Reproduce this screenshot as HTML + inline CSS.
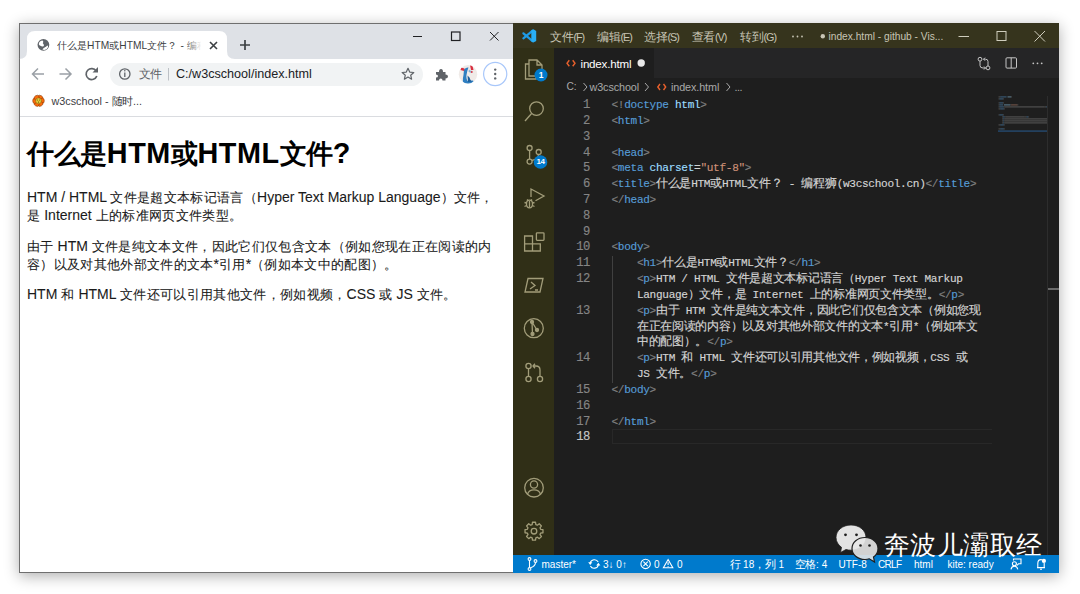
<!DOCTYPE html><html><head><meta charset="utf-8"><style>
*{margin:0;padding:0;box-sizing:border-box}
html,body{width:1080px;height:594px;overflow:hidden;background:#fff;font-family:"Liberation Sans",sans-serif}
.abs{position:absolute}
.cj{display:inline-block;white-space:nowrap;overflow:visible}
.r{display:inline-block;white-space:pre}
.nw{white-space:pre}
svg{position:absolute;overflow:visible}
</style></head><body>
<div class="abs" style="left:19px;top:23px;width:1040px;height:550px;box-shadow:0 3px 14px rgba(0,0,0,0.32)"></div>
<div class="abs" style="left:19px;top:23px;width:495px;height:550px;background:#fff;border:1px solid #6f6f6f"></div>
<div class="abs" style="left:20px;top:24px;width:493px;height:35px;background:#dee1e6"></div>
<svg style="left:0;top:0" width="1080" height="594"><path d="M19,59 Q27,59 27,51 L27,39 Q27,31 35,31 L219,31 Q227,31 227,39 L227,51 Q227,59 235,59 Z" fill="#fff"/></svg>
<svg style="left:0;top:0" width="1080" height="594"><circle cx="43.4" cy="44.8" r="5.9" fill="#5f6368"/>
<path d="M38.8,44.2 Q39,41.2 42.2,40.6 Q43.6,40.8 43.2,42.2 Q42.2,43 43.6,44.2 Q44.6,45.4 43.2,46.4 Q41.6,46.6 40.4,45.8 Q39.2,45.4 38.8,44.2 Z" fill="#fff"/>
<path d="M42.4,49.6 Q43.2,47.8 45,47.2 Q46.6,46.6 47.2,45.4 Q48.4,45.6 48,47.2 Q47,49.6 44.2,50 Z" fill="#fff"/></svg>
<div class="abs nw" style="left:56.5px;top:39px;font-size:10.2px;line-height:13px;color:#3c4043;width:150px;overflow:hidden"><span class="cj" style="width:30.60px;font-size:10.00px;letter-spacing:0.20px">什么是</span><span class="r" style="width:22.08px">HTM</span><span class="cj" style="width:10.20px;font-size:10.00px;letter-spacing:0.20px">或</span><span class="r" style="width:27.73px">HTML</span><span class="cj" style="width:30.60px;font-size:10.00px;letter-spacing:0.20px">文件？</span><span class="r" style="width:9.06px"> - </span><span class="cj" style="width:30.60px;font-size:10.00px;letter-spacing:0.20px">编程狮</span></div>
<div class="abs" style="left:185px;top:33px;width:22px;height:24px;background:linear-gradient(90deg,rgba(255,255,255,0),#fff 75%)"></div>
<svg style="left:209px;top:41px" width="9" height="9"><path d="M1,1 L8,8 M8,1 L1,8" stroke="#3c4043" stroke-width="1.6"/></svg>
<svg style="left:239px;top:39px" width="12" height="12"><path d="M6,1 L6,11 M1,6 L11,6" stroke="#3c4043" stroke-width="1.7"/></svg>
<svg style="left:0;top:0" width="1080" height="594"><path d="M413,36.5 L422,36.5" stroke="#202124" stroke-width="1"/><rect x="451.5" y="32" width="8.5" height="8.5" fill="none" stroke="#202124" stroke-width="1.2"/><path d="M490,32 L498.5,40.5 M498.5,32 L490,40.5" stroke="#202124" stroke-width="1"/></svg>
<svg style="left:0;top:0" width="1080" height="594">
<path d="M44,74 L32.5,74 M38,68.5 L32.5,74 L38,79.5" stroke="#9aa0a6" stroke-width="1.5" fill="none"/>
<path d="M59.5,74 L71,74 M65.5,68.5 L71,74 L65.5,79.5" stroke="#9aa0a6" stroke-width="1.5" fill="none"/>
<path d="M96.2,71 A5.5,5.5 0 1 0 96.8,76" stroke="#5f6368" stroke-width="1.7" fill="none"/>
<path d="M98,67 L98,72.5 L92.5,72.5 Z" fill="#5f6368"/>
</svg>
<div class="abs" style="left:110px;top:62.5px;width:313px;height:23px;border-radius:12px;background:#f1f3f4"></div>
<svg style="left:0;top:0" width="1080" height="594">
<circle cx="124.8" cy="74" r="5.2" stroke="#5f6368" stroke-width="1.3" fill="none"/>
<path d="M124.8,72.5 L124.8,77" stroke="#5f6368" stroke-width="1.3"/><circle cx="124.8" cy="70.8" r="0.8" fill="#5f6368"/>
<path d="M168.5,68 L168.5,80.5" stroke="#bdc1c6" stroke-width="1"/>
</svg>
<div class="abs nw" style="left:138.5px;top:66px;font-size:11.5px;line-height:16px;color:#5f6368"><span class="cj" style="width:23.00px;font-size:12.00px;letter-spacing:-0.50px">文件</span></div>
<div class="abs nw" style="left:176px;top:66px;font-size:12.6px;line-height:16px;color:#202124">C:/w3cschool/index.html</div>
<svg style="left:0;top:0" width="1080" height="594"><path d="M408,68.3 L409.7,72.1 L413.8,72.5 L410.7,75.2 L411.6,79.2 L408,77.1 L404.4,79.2 L405.3,75.2 L402.2,72.5 L406.3,72.1 Z" fill="none" stroke="#5f6368" stroke-width="1.2" stroke-linejoin="round"/></svg>
<svg style="left:435px;top:68px" width="13" height="13" viewBox="0 0 13 13"><path d="M1,4 L4,4 Q4,1 6,1 Q8,1 8,4 L10.5,4 L10.5,6.5 Q13,6.5 13,8.5 Q13,10.5 10.5,10.5 L10.5,12.5 L7.5,12.5 Q7.5,10.5 5.8,10.5 Q4,10.5 4,12.5 L1,12.5 L1,9.5 Q3,9.5 3,8 Q3,6.5 1,6.5 Z" fill="#5f6368"/></svg>
<svg style="left:0;top:0" width="1080" height="594"><defs><clipPath id="av"><circle cx="468" cy="74.2" r="9.2"/></clipPath></defs>
<g clip-path="url(#av)"><rect x="458" y="64" width="21" height="21" fill="#f0ebe8"/>
<path d="M464,69.5 Q466.5,67 468.5,67.5 Q467,71 466.5,75 Q466,78.5 467.5,81 L473,80.5 Q474.5,83 474,84.5 L463,84.5 Q462.5,79 463.5,75 Z" fill="#2f7fc1"/>
<path d="M467.5,75.5 Q470,77 470.5,80 L472,81.5 L468,82 Z" fill="#1d5f9c"/>
<path d="M469,69.5 Q470,71 471.5,70.5 L471.5,72.5 Q469.5,73 468.5,71.5 Z" fill="#8ab4d6"/>
<path d="M461,67.5 L464.5,68.5 L464,71 L460.5,70 Z" fill="#d93040"/><path d="M470,65 L472.5,65.5 L473.5,70 L471,70 Z" fill="#d93040"/><circle cx="471.8" cy="72" r="0.9" fill="#d93040"/>
</g></svg>
<svg style="left:0;top:0" width="1080" height="594"><circle cx="495.2" cy="74" r="11.6" fill="none" stroke="#a8c7fa" stroke-width="1.2"/>
<circle cx="495.2" cy="69.6" r="1.2" fill="#5f6368"/><circle cx="495.2" cy="74" r="1.2" fill="#5f6368"/><circle cx="495.2" cy="78.4" r="1.2" fill="#5f6368"/></svg>
<svg style="left:0;top:0" width="1080" height="594">
<g fill="#fb6b0c" stroke="#7a3500" stroke-width="0.5"><ellipse cx="40.35" cy="97.60" rx="2.7" ry="2.1" transform="rotate(30.0 40.35 97.60)"/><ellipse cx="42.20" cy="100.80" rx="2.7" ry="2.1" transform="rotate(90.0 42.20 100.80)"/><ellipse cx="40.35" cy="104.00" rx="2.7" ry="2.1" transform="rotate(150.0 40.35 104.00)"/><ellipse cx="36.65" cy="104.00" rx="2.7" ry="2.1" transform="rotate(210.0 36.65 104.00)"/><ellipse cx="34.80" cy="100.80" rx="2.7" ry="2.1" transform="rotate(270.0 34.80 100.80)"/><ellipse cx="36.65" cy="97.60" rx="2.7" ry="2.1" transform="rotate(330.0 36.65 97.60)"/></g>
<circle cx="38.5" cy="100.8" r="2.9" fill="#e6cf3c" stroke="#6b4a00" stroke-width="0.4"/><g fill="#3a3000"><circle cx="37.3" cy="100" r="0.5"/><circle cx="39.7" cy="100" r="0.5"/><circle cx="38.5" cy="102" r="0.6"/></g>
</svg>
<div class="abs nw" style="left:51.5px;top:93.5px;font-size:10.8px;line-height:14px;color:#3c4043"><span class="r" style="width:60.02px">w3cschool - </span><span class="cj" style="width:21.60px;font-size:11.00px;letter-spacing:-0.20px">随时</span><span class="r" style="width:9.00px">...</span></div>
<div class="abs" style="left:20px;top:116px;width:493px;height:1px;background:#dadce0"></div>
<div class="abs nw" style="left:27px;top:138px;font-size:28.8px;line-height:30px;font-weight:bold;color:#000;letter-spacing:0.55px"><span class="cj" style="width:79.80px;font-size:27.00px;letter-spacing:-0.40px">什么是</span><span class="r" style="width:64.03px">HTM</span><span class="cj" style="width:26.60px;font-size:27.00px;letter-spacing:-0.40px">或</span><span class="r" style="width:82.17px">HTML</span><span class="cj" style="width:53.20px;font-size:27.00px;letter-spacing:-0.40px">文件</span><span class="r" style="width:18.14px">?</span></div>
<div class="abs nw" style="left:27px;top:189.3px;font-size:14px;line-height:16px;color:#1a1a1a;-webkit-text-stroke:0.08px #1a1a1a"><span class="r" style="width:83.48px">HTM / HTML </span><span class="cj" style="width:146.63px;font-size:13.00px;letter-spacing:0.33px">文件是超文本标记语言（</span><span class="r" style="width:183.42px">Hyper Text Markup Language</span><span class="cj" style="width:53.32px;font-size:13.00px;letter-spacing:0.33px">）文件，</span></div>
<div class="abs nw" style="left:27px;top:207.0px;font-size:14px;line-height:16px;color:#1a1a1a;-webkit-text-stroke:0.08px #1a1a1a"><span class="cj" style="width:13.33px;font-size:13.00px;letter-spacing:0.33px">是</span><span class="r" style="width:55.27px"> Internet </span><span class="cj" style="width:146.63px;font-size:13.00px;letter-spacing:0.33px">上的标准网页文件类型。</span></div>
<div class="abs nw" style="left:27px;top:238.4px;font-size:14px;line-height:16px;color:#1a1a1a;-webkit-text-stroke:0.08px #1a1a1a"><span class="cj" style="width:26.66px;font-size:13.00px;letter-spacing:0.33px">由于</span><span class="r" style="width:38.11px"> HTM </span><span class="cj" style="width:399.90px;font-size:13.00px;letter-spacing:0.33px">文件是纯文本文件，因此它们仅包含文本（例如您现在正在阅读的内</span></div>
<div class="abs nw" style="left:27px;top:256.1px;font-size:14px;line-height:16px;color:#1a1a1a;-webkit-text-stroke:0.08px #1a1a1a"><span class="cj" style="width:186.62px;font-size:13.00px;letter-spacing:0.33px">容）以及对其他外部文件的文本</span><span class="r" style="width:5.45px">*</span><span class="cj" style="width:26.66px;font-size:13.00px;letter-spacing:0.33px">引用</span><span class="r" style="width:5.45px">*</span><span class="cj" style="width:146.63px;font-size:13.00px;letter-spacing:0.33px">（例如本文中的配图）。</span></div>
<div class="abs nw" style="left:27px;top:285.7px;font-size:14px;line-height:16px;color:#1a1a1a;-webkit-text-stroke:0.08px #1a1a1a"><span class="r" style="width:34.22px">HTM </span><span class="cj" style="width:13.33px;font-size:13.00px;letter-spacing:0.33px">和</span><span class="r" style="width:45.38px"> HTML </span><span class="cj" style="width:226.61px;font-size:13.00px;letter-spacing:0.33px">文件还可以引用其他文件，例如视频，</span><span class="r" style="width:32.69px">CSS </span><span class="cj" style="width:13.33px;font-size:13.00px;letter-spacing:0.33px">或</span><span class="r" style="width:24.12px"> JS </span><span class="cj" style="width:39.99px;font-size:13.00px;letter-spacing:0.33px">文件。</span></div>
<div class="abs" style="left:513px;top:23px;width:546px;height:550px;background:#1e1e1e"></div>
<div class="abs" style="left:513px;top:23px;width:546px;height:25px;background:#36341d"></div>
<div class="abs" style="left:513px;top:48px;width:41px;height:507px;background:#302f17"></div>
<div class="abs" style="left:554px;top:48px;width:505px;height:29.5px;background:#252526"></div>
<div class="abs" style="left:554px;top:48px;width:99.5px;height:29.5px;background:#1e1e1e"></div>
<div class="abs" style="left:513px;top:555px;width:546px;height:18px;background:#007acc"></div>
<svg style="left:0;top:0" width="1080" height="594"><g stroke="#1f9be6" stroke-width="2.2" stroke-linecap="round"><path d="M523.4,33.3 L532.6,41.2"/><path d="M523.4,38.3 L532.6,30.6"/></g>
<path d="M531.3,30.6 L533.4,29.2 L536.2,30.9 L536.2,41 L533.4,42.6 L531.3,41.3 Z" fill="#29aef5"/></svg>
<div class="abs nw" style="left:550.0px;top:29.5px;font-size:10.8px;line-height:15px;color:#c8c5b5;letter-spacing:-1.1px"><span class="cj" style="width:23.60px;font-size:12.00px;letter-spacing:-0.20px">文件</span><span class="r" style="width:10.50px">(F)</span></div>
<div class="abs nw" style="left:597.0px;top:29.5px;font-size:10.8px;line-height:15px;color:#c8c5b5;letter-spacing:-1.1px"><span class="cj" style="width:23.60px;font-size:12.00px;letter-spacing:-0.20px">编辑</span><span class="r" style="width:11.09px">(E)</span></div>
<div class="abs nw" style="left:644.0px;top:29.5px;font-size:10.8px;line-height:15px;color:#c8c5b5;letter-spacing:-1.1px"><span class="cj" style="width:23.60px;font-size:12.00px;letter-spacing:-0.20px">选择</span><span class="r" style="width:11.09px">(S)</span></div>
<div class="abs nw" style="left:691.5px;top:29.5px;font-size:10.8px;line-height:15px;color:#c8c5b5;letter-spacing:-1.1px"><span class="cj" style="width:23.60px;font-size:12.00px;letter-spacing:-0.20px">查看</span><span class="r" style="width:11.09px">(V)</span></div>
<div class="abs nw" style="left:740.0px;top:29.5px;font-size:10.8px;line-height:15px;color:#c8c5b5;letter-spacing:-1.1px"><span class="cj" style="width:23.60px;font-size:12.00px;letter-spacing:-0.20px">转到</span><span class="r" style="width:12.30px">(G)</span></div>
<svg style="left:0;top:0" width="1080" height="594"><g fill="#c8c5b5"><circle cx="793" cy="36.5" r="0.9"/><circle cx="797.5" cy="36.5" r="0.9"/><circle cx="802" cy="36.5" r="0.9"/></g></svg>
<svg style="left:0;top:0" width="1080" height="594"><circle cx="822.8" cy="36.3" r="2.2" fill="#c8c5b5"/></svg>
<div class="abs nw" style="left:828.5px;top:30px;font-size:10.2px;line-height:13px;color:#c8c5b5">index.html - github - Vis...</div>
<svg style="left:0;top:0" width="1080" height="594"><path d="M958.5,36.5 L969,36.5" stroke="#cfcdbd" stroke-width="1"/><rect x="997" y="31.5" width="9" height="9" fill="none" stroke="#cfcdbd" stroke-width="1"/><path d="M1034.5,31 L1045,41.5 M1045,31 L1034.5,41.5" stroke="#cfcdbd" stroke-width="1"/></svg>
<svg style="left:566px;top:59px" width="10" height="9"><path d="M3.3,1.2 L1,4.2 L3.3,7.2 M6.7,1.2 L9,4.2 L6.7,7.2" stroke="#e8602c" stroke-width="1.4" fill="none"/></svg>
<div class="abs nw" style="left:580.5px;top:56px;font-size:11.6px;line-height:15px;color:#fff;letter-spacing:-0.2px">index.html</div>
<svg style="left:0;top:0" width="1080" height="594"><circle cx="641.2" cy="63" r="3.7" fill="#e8e8e8"/></svg>
<svg style="left:0;top:0" width="1080" height="594" fill="none" stroke="#c5c5c5" stroke-width="1">
<circle cx="980" cy="59.2" r="1.9"/><circle cx="988" cy="67.9" r="1.9"/><path d="M980,61.1 L980,65.5 Q980,68 983,68 L985.5,68 M984,66.5 L985.5,68 L984,69.5 M988,66 L988,61.5 Q988,59.2 985.5,59.2 L983.5,59.2 M985,57.7 L983.5,59.2 L985,60.7"/>
<rect x="1006" y="57.8" width="10.5" height="10.3" rx="1"/><path d="M1011.2,57.8 L1011.2,68.1"/>
</svg>
<svg style="left:0;top:0" width="1080" height="594"><g fill="#c5c5c5"><circle cx="1033.3" cy="63.3" r="0.9"/><circle cx="1037.5" cy="63.3" r="0.9"/><circle cx="1041.7" cy="63.3" r="0.9"/></g></svg>
<div class="abs nw" style="left:566.5px;top:80px;font-size:10.2px;line-height:14px;color:#a9a9a9">C:</div>
<svg style="left:0;top:0" width="1080" height="594" fill="none" stroke="#a9a9a9" stroke-width="1">
<path d="M583.5,83 L587,87 L583.5,91"/><path d="M645,83 L648.5,87 L645,91"/><path d="M726.5,83 L730,87 L726.5,91"/>
<path d="M660,84 L657.8,87 L660,90 M663.5,84 L665.7,87 L663.5,90" stroke="#e8602c" stroke-width="1.4"/>
</svg>
<div class="abs nw" style="left:589.5px;top:79.5px;font-size:10.8px;line-height:14px;color:#a9a9a9;letter-spacing:-0.1px">w3cschool</div>
<div class="abs nw" style="left:671px;top:79.5px;font-size:10.8px;line-height:14px;color:#a9a9a9;letter-spacing:-0.1px">index.html</div>
<div class="abs nw" style="left:734.5px;top:79.5px;font-size:10.8px;line-height:14px;color:#a9a9a9;letter-spacing:-0.5px">...</div>
<div class="abs" style="left:612px;top:429.2px;width:380px;height:15px;border:1px solid #282828;border-right:none"></div>
<div class="abs" style="left:612px;top:256.30px;width:1px;height:126.56px;background:#404040"></div>
<div class="abs nw" style="left:560px;width:29.8px;text-align:right;top:98.10px;font-family:'Liberation Mono',monospace;font-size:12.2px;line-height:15.82px;color:#858585;letter-spacing:-0.6px;-webkit-text-stroke:0.15px">1</div>
<div class="abs nw" style="left:560px;width:29.8px;text-align:right;top:113.92px;font-family:'Liberation Mono',monospace;font-size:12.2px;line-height:15.82px;color:#858585;letter-spacing:-0.6px;-webkit-text-stroke:0.15px">2</div>
<div class="abs nw" style="left:560px;width:29.8px;text-align:right;top:129.74px;font-family:'Liberation Mono',monospace;font-size:12.2px;line-height:15.82px;color:#858585;letter-spacing:-0.6px;-webkit-text-stroke:0.15px">3</div>
<div class="abs nw" style="left:560px;width:29.8px;text-align:right;top:145.56px;font-family:'Liberation Mono',monospace;font-size:12.2px;line-height:15.82px;color:#858585;letter-spacing:-0.6px;-webkit-text-stroke:0.15px">4</div>
<div class="abs nw" style="left:560px;width:29.8px;text-align:right;top:161.38px;font-family:'Liberation Mono',monospace;font-size:12.2px;line-height:15.82px;color:#858585;letter-spacing:-0.6px;-webkit-text-stroke:0.15px">5</div>
<div class="abs nw" style="left:560px;width:29.8px;text-align:right;top:177.20px;font-family:'Liberation Mono',monospace;font-size:12.2px;line-height:15.82px;color:#858585;letter-spacing:-0.6px;-webkit-text-stroke:0.15px">6</div>
<div class="abs nw" style="left:560px;width:29.8px;text-align:right;top:193.02px;font-family:'Liberation Mono',monospace;font-size:12.2px;line-height:15.82px;color:#858585;letter-spacing:-0.6px;-webkit-text-stroke:0.15px">7</div>
<div class="abs nw" style="left:560px;width:29.8px;text-align:right;top:208.84px;font-family:'Liberation Mono',monospace;font-size:12.2px;line-height:15.82px;color:#858585;letter-spacing:-0.6px;-webkit-text-stroke:0.15px">8</div>
<div class="abs nw" style="left:560px;width:29.8px;text-align:right;top:224.66px;font-family:'Liberation Mono',monospace;font-size:12.2px;line-height:15.82px;color:#858585;letter-spacing:-0.6px;-webkit-text-stroke:0.15px">9</div>
<div class="abs nw" style="left:560px;width:29.8px;text-align:right;top:240.48px;font-family:'Liberation Mono',monospace;font-size:12.2px;line-height:15.82px;color:#858585;letter-spacing:-0.6px;-webkit-text-stroke:0.15px">10</div>
<div class="abs nw" style="left:560px;width:29.8px;text-align:right;top:256.30px;font-family:'Liberation Mono',monospace;font-size:12.2px;line-height:15.82px;color:#858585;letter-spacing:-0.6px;-webkit-text-stroke:0.15px">11</div>
<div class="abs nw" style="left:560px;width:29.8px;text-align:right;top:272.12px;font-family:'Liberation Mono',monospace;font-size:12.2px;line-height:15.82px;color:#858585;letter-spacing:-0.6px;-webkit-text-stroke:0.15px">12</div>
<div class="abs nw" style="left:560px;width:29.8px;text-align:right;top:303.76px;font-family:'Liberation Mono',monospace;font-size:12.2px;line-height:15.82px;color:#858585;letter-spacing:-0.6px;-webkit-text-stroke:0.15px">13</div>
<div class="abs nw" style="left:560px;width:29.8px;text-align:right;top:351.22px;font-family:'Liberation Mono',monospace;font-size:12.2px;line-height:15.82px;color:#858585;letter-spacing:-0.6px;-webkit-text-stroke:0.15px">14</div>
<div class="abs nw" style="left:560px;width:29.8px;text-align:right;top:382.86px;font-family:'Liberation Mono',monospace;font-size:12.2px;line-height:15.82px;color:#858585;letter-spacing:-0.6px;-webkit-text-stroke:0.15px">15</div>
<div class="abs nw" style="left:560px;width:29.8px;text-align:right;top:398.68px;font-family:'Liberation Mono',monospace;font-size:12.2px;line-height:15.82px;color:#858585;letter-spacing:-0.6px;-webkit-text-stroke:0.15px">16</div>
<div class="abs nw" style="left:560px;width:29.8px;text-align:right;top:414.50px;font-family:'Liberation Mono',monospace;font-size:12.2px;line-height:15.82px;color:#858585;letter-spacing:-0.6px;-webkit-text-stroke:0.15px">17</div>
<div class="abs nw" style="left:560px;width:29.8px;text-align:right;top:430.32px;font-family:'Liberation Mono',monospace;font-size:12.2px;line-height:15.82px;color:#c6c6c6;letter-spacing:-0.6px;-webkit-text-stroke:0.15px">18</div>
<div class="abs nw" style="left:611.5px;top:98.10px;font-family:'Liberation Mono',monospace;font-size:11.1px;letter-spacing:-0.31px;line-height:15.82px;-webkit-text-stroke:0.15px"><span style="color:#808080"><span class="r" style="width:12.70px">&lt;!</span></span><span style="color:#569cd6"><span class="r" style="width:44.44px">doctype</span></span><span style="color:#d4d4d4"><span class="r" style="width:6.36px"> </span></span><span style="color:#9cdcfe"><span class="r" style="width:25.39px">html</span></span><span style="color:#808080"><span class="r" style="width:6.36px">&gt;</span></span></div>
<div class="abs nw" style="left:611.5px;top:113.92px;font-family:'Liberation Mono',monospace;font-size:11.1px;letter-spacing:-0.31px;line-height:15.82px;-webkit-text-stroke:0.15px"><span style="color:#808080"><span class="r" style="width:6.36px">&lt;</span></span><span style="color:#569cd6"><span class="r" style="width:25.39px">html</span></span><span style="color:#808080"><span class="r" style="width:6.36px">&gt;</span></span></div>
<div class="abs nw" style="left:611.5px;top:145.56px;font-family:'Liberation Mono',monospace;font-size:11.1px;letter-spacing:-0.31px;line-height:15.82px;-webkit-text-stroke:0.15px"><span style="color:#808080"><span class="r" style="width:6.36px">&lt;</span></span><span style="color:#569cd6"><span class="r" style="width:25.39px">head</span></span><span style="color:#808080"><span class="r" style="width:6.36px">&gt;</span></span></div>
<div class="abs nw" style="left:611.5px;top:161.38px;font-family:'Liberation Mono',monospace;font-size:11.1px;letter-spacing:-0.31px;line-height:15.82px;-webkit-text-stroke:0.15px"><span style="color:#808080"><span class="r" style="width:6.36px">&lt;</span></span><span style="color:#569cd6"><span class="r" style="width:25.39px">meta</span></span><span style="color:#d4d4d4"><span class="r" style="width:6.36px"> </span></span><span style="color:#9cdcfe"><span class="r" style="width:44.44px">charset</span></span><span style="color:#d4d4d4"><span class="r" style="width:6.36px">=</span></span><span style="color:#ce9178"><span class="r" style="width:44.44px">&quot;utf-8&quot;</span></span><span style="color:#808080"><span class="r" style="width:6.36px">&gt;</span></span></div>
<div class="abs nw" style="left:611.5px;top:177.20px;font-family:'Liberation Mono',monospace;font-size:11.1px;letter-spacing:-0.31px;line-height:15.82px;-webkit-text-stroke:0.15px"><span style="color:#808080"><span class="r" style="width:6.36px">&lt;</span></span><span style="color:#569cd6"><span class="r" style="width:31.75px">title</span></span><span style="color:#808080"><span class="r" style="width:6.36px">&gt;</span></span><span style="color:#d4d4d4"><span class="cj" style="width:35.16px;font-size:12.00px;letter-spacing:-0.28px">什么是</span><span class="r" style="width:19.05px">HTM</span><span class="cj" style="width:11.72px;font-size:12.00px;letter-spacing:-0.28px">或</span><span class="r" style="width:25.39px">HTML</span><span class="cj" style="width:35.16px;font-size:12.00px;letter-spacing:-0.28px">文件？</span><span class="r" style="width:19.05px"> - </span><span class="cj" style="width:35.16px;font-size:12.00px;letter-spacing:-0.28px">编程狮</span><span class="r" style="width:88.88px">(w3cschool.cn)</span></span><span style="color:#808080"><span class="r" style="width:12.70px">&lt;/</span></span><span style="color:#569cd6"><span class="r" style="width:31.75px">title</span></span><span style="color:#808080"><span class="r" style="width:6.36px">&gt;</span></span></div>
<div class="abs nw" style="left:611.5px;top:193.02px;font-family:'Liberation Mono',monospace;font-size:11.1px;letter-spacing:-0.31px;line-height:15.82px;-webkit-text-stroke:0.15px"><span style="color:#808080"><span class="r" style="width:12.70px">&lt;/</span></span><span style="color:#569cd6"><span class="r" style="width:25.39px">head</span></span><span style="color:#808080"><span class="r" style="width:6.36px">&gt;</span></span></div>
<div class="abs nw" style="left:611.5px;top:240.48px;font-family:'Liberation Mono',monospace;font-size:11.1px;letter-spacing:-0.31px;line-height:15.82px;-webkit-text-stroke:0.15px"><span style="color:#808080"><span class="r" style="width:6.36px">&lt;</span></span><span style="color:#569cd6"><span class="r" style="width:25.39px">body</span></span><span style="color:#808080"><span class="r" style="width:6.36px">&gt;</span></span></div>
<div class="abs nw" style="left:611.5px;top:256.30px;font-family:'Liberation Mono',monospace;font-size:11.1px;letter-spacing:-0.31px;line-height:15.82px;-webkit-text-stroke:0.15px"><span style="color:#d4d4d4"><span class="r" style="width:25.39px">    </span></span><span style="color:#808080"><span class="r" style="width:6.36px">&lt;</span></span><span style="color:#569cd6"><span class="r" style="width:12.70px">h1</span></span><span style="color:#808080"><span class="r" style="width:6.36px">&gt;</span></span><span style="color:#d4d4d4"><span class="cj" style="width:35.16px;font-size:12.00px;letter-spacing:-0.28px">什么是</span><span class="r" style="width:19.05px">HTM</span><span class="cj" style="width:11.72px;font-size:12.00px;letter-spacing:-0.28px">或</span><span class="r" style="width:25.39px">HTML</span><span class="cj" style="width:35.16px;font-size:12.00px;letter-spacing:-0.28px">文件？</span></span><span style="color:#808080"><span class="r" style="width:12.70px">&lt;/</span></span><span style="color:#569cd6"><span class="r" style="width:12.70px">h1</span></span><span style="color:#808080"><span class="r" style="width:6.36px">&gt;</span></span></div>
<div class="abs nw" style="left:611.5px;top:272.12px;font-family:'Liberation Mono',monospace;font-size:11.1px;letter-spacing:-0.31px;line-height:15.82px;-webkit-text-stroke:0.15px"><span style="color:#d4d4d4"><span class="r" style="width:25.39px">    </span></span><span style="color:#808080"><span class="r" style="width:6.36px">&lt;</span></span><span style="color:#569cd6"><span class="r" style="width:6.36px">p</span></span><span style="color:#808080"><span class="r" style="width:6.36px">&gt;</span></span><span style="color:#d4d4d4"><span class="r" style="width:69.83px">HTM / HTML </span><span class="cj" style="width:128.92px;font-size:12.00px;letter-spacing:-0.28px">文件是超文本标记语言（</span><span class="r" style="width:107.91px">Hyper Text Markup</span></span></div>
<div class="abs nw" style="left:611.5px;top:287.94px;font-family:'Liberation Mono',monospace;font-size:11.1px;letter-spacing:-0.31px;line-height:15.82px;-webkit-text-stroke:0.15px"><span style="color:#d4d4d4"><span class="r" style="width:76.17px">    Language</span><span class="cj" style="width:58.60px;font-size:12.00px;letter-spacing:-0.28px">）文件，是</span><span class="r" style="width:63.48px"> Internet </span><span class="cj" style="width:128.92px;font-size:12.00px;letter-spacing:-0.28px">上的标准网页文件类型。</span></span><span style="color:#808080"><span class="r" style="width:12.70px">&lt;/</span></span><span style="color:#569cd6"><span class="r" style="width:6.36px">p</span></span><span style="color:#808080"><span class="r" style="width:6.36px">&gt;</span></span></div>
<div class="abs nw" style="left:611.5px;top:303.76px;font-family:'Liberation Mono',monospace;font-size:11.1px;letter-spacing:-0.31px;line-height:15.82px;-webkit-text-stroke:0.15px"><span style="color:#d4d4d4"><span class="r" style="width:25.39px">    </span></span><span style="color:#808080"><span class="r" style="width:6.36px">&lt;</span></span><span style="color:#569cd6"><span class="r" style="width:6.36px">p</span></span><span style="color:#808080"><span class="r" style="width:6.36px">&gt;</span></span><span style="color:#d4d4d4"><span class="cj" style="width:23.44px;font-size:12.00px;letter-spacing:-0.28px">由于</span><span class="r" style="width:31.75px"> HTM </span><span class="cj" style="width:269.56px;font-size:12.00px;letter-spacing:-0.28px">文件是纯文本文件，因此它们仅包含文本（例如您现</span></span></div>
<div class="abs nw" style="left:611.5px;top:319.58px;font-family:'Liberation Mono',monospace;font-size:11.1px;letter-spacing:-0.31px;line-height:15.82px;-webkit-text-stroke:0.15px"><span style="color:#d4d4d4"><span class="r" style="width:25.39px">    </span><span class="cj" style="width:246.12px;font-size:12.00px;letter-spacing:-0.28px">在正在阅读的内容）以及对其他外部文件的文本</span><span class="r" style="width:6.36px">*</span><span class="cj" style="width:23.44px;font-size:12.00px;letter-spacing:-0.28px">引用</span><span class="r" style="width:6.36px">*</span><span class="cj" style="width:58.60px;font-size:12.00px;letter-spacing:-0.28px">（例如本文</span></span></div>
<div class="abs nw" style="left:611.5px;top:335.40px;font-family:'Liberation Mono',monospace;font-size:11.1px;letter-spacing:-0.31px;line-height:15.82px;-webkit-text-stroke:0.15px"><span style="color:#d4d4d4"><span class="r" style="width:25.39px">    </span><span class="cj" style="width:70.32px;font-size:12.00px;letter-spacing:-0.28px">中的配图）。</span></span><span style="color:#808080"><span class="r" style="width:12.70px">&lt;/</span></span><span style="color:#569cd6"><span class="r" style="width:6.36px">p</span></span><span style="color:#808080"><span class="r" style="width:6.36px">&gt;</span></span></div>
<div class="abs nw" style="left:611.5px;top:351.22px;font-family:'Liberation Mono',monospace;font-size:11.1px;letter-spacing:-0.31px;line-height:15.82px;-webkit-text-stroke:0.15px"><span style="color:#d4d4d4"><span class="r" style="width:25.39px">    </span></span><span style="color:#808080"><span class="r" style="width:6.36px">&lt;</span></span><span style="color:#569cd6"><span class="r" style="width:6.36px">p</span></span><span style="color:#808080"><span class="r" style="width:6.36px">&gt;</span></span><span style="color:#d4d4d4"><span class="r" style="width:25.39px">HTM </span><span class="cj" style="width:11.72px;font-size:12.00px;letter-spacing:-0.28px">和</span><span class="r" style="width:38.09px"> HTML </span><span class="cj" style="width:199.24px;font-size:12.00px;letter-spacing:-0.28px">文件还可以引用其他文件，例如视频，</span><span class="r" style="width:25.39px">CSS </span><span class="cj" style="width:11.72px;font-size:12.00px;letter-spacing:-0.28px">或</span></span></div>
<div class="abs nw" style="left:611.5px;top:367.04px;font-family:'Liberation Mono',monospace;font-size:11.1px;letter-spacing:-0.31px;line-height:15.82px;-webkit-text-stroke:0.15px"><span style="color:#d4d4d4"><span class="r" style="width:44.44px">    JS </span><span class="cj" style="width:35.16px;font-size:12.00px;letter-spacing:-0.28px">文件。</span></span><span style="color:#808080"><span class="r" style="width:12.70px">&lt;/</span></span><span style="color:#569cd6"><span class="r" style="width:6.36px">p</span></span><span style="color:#808080"><span class="r" style="width:6.36px">&gt;</span></span></div>
<div class="abs nw" style="left:611.5px;top:382.86px;font-family:'Liberation Mono',monospace;font-size:11.1px;letter-spacing:-0.31px;line-height:15.82px;-webkit-text-stroke:0.15px"><span style="color:#808080"><span class="r" style="width:12.70px">&lt;/</span></span><span style="color:#569cd6"><span class="r" style="width:25.39px">body</span></span><span style="color:#808080"><span class="r" style="width:6.36px">&gt;</span></span></div>
<div class="abs nw" style="left:611.5px;top:414.50px;font-family:'Liberation Mono',monospace;font-size:11.1px;letter-spacing:-0.31px;line-height:15.82px;-webkit-text-stroke:0.15px"><span style="color:#808080"><span class="r" style="width:12.70px">&lt;/</span></span><span style="color:#569cd6"><span class="r" style="width:25.39px">html</span></span><span style="color:#808080"><span class="r" style="width:6.36px">&gt;</span></span></div>
<svg style="left:0;top:0" width="1080" height="594"><rect x="998.5" y="96.3" width="1.8" height="1.2" fill="#808080" opacity="0.45"/><rect x="1000.3" y="96.3" width="6.3" height="1.2" fill="#569cd6" opacity="0.45"/><rect x="1007.5" y="96.3" width="3.6" height="1.2" fill="#9cdcfe" opacity="0.45"/><rect x="1011.1" y="96.3" width="0.9" height="1.2" fill="#808080" opacity="0.45"/><rect x="998.5" y="98.3" width="0.9" height="1.2" fill="#808080" opacity="0.45"/><rect x="999.4" y="98.3" width="3.6" height="1.2" fill="#569cd6" opacity="0.45"/><rect x="1003.0" y="98.3" width="0.9" height="1.2" fill="#808080" opacity="0.45"/><rect x="998.5" y="102.3" width="0.9" height="1.2" fill="#808080" opacity="0.45"/><rect x="999.4" y="102.3" width="3.6" height="1.2" fill="#569cd6" opacity="0.45"/><rect x="1003.0" y="102.3" width="0.9" height="1.2" fill="#808080" opacity="0.45"/><rect x="998.5" y="104.3" width="0.9" height="1.2" fill="#808080" opacity="0.45"/><rect x="999.4" y="104.3" width="3.6" height="1.2" fill="#569cd6" opacity="0.45"/><rect x="1003.9" y="104.3" width="6.3" height="1.2" fill="#9cdcfe" opacity="0.45"/><rect x="1010.2" y="104.3" width="0.9" height="1.2" fill="#d4d4d4" opacity="0.27"/><rect x="1011.1" y="104.3" width="6.3" height="1.2" fill="#ce9178" opacity="0.45"/><rect x="1017.4" y="104.3" width="0.9" height="1.2" fill="#808080" opacity="0.45"/><rect x="998.5" y="106.3" width="0.9" height="1.2" fill="#808080" opacity="0.45"/><rect x="999.4" y="106.3" width="4.5" height="1.2" fill="#569cd6" opacity="0.45"/><rect x="1003.9" y="106.3" width="0.9" height="1.2" fill="#808080" opacity="0.45"/><rect x="1004.8" y="106.3" width="39.6" height="1.2" fill="#d4d4d4" opacity="0.27"/><rect x="1044.4" y="106.3" width="1.8" height="1.2" fill="#808080" opacity="0.45"/><rect x="1046.2" y="106.3" width="0.8" height="1.2" fill="#569cd6" opacity="0.45"/><rect x="998.5" y="108.3" width="1.8" height="1.2" fill="#808080" opacity="0.45"/><rect x="1000.3" y="108.3" width="3.6" height="1.2" fill="#569cd6" opacity="0.45"/><rect x="1003.9" y="108.3" width="0.9" height="1.2" fill="#808080" opacity="0.45"/><rect x="998.5" y="114.3" width="0.9" height="1.2" fill="#808080" opacity="0.45"/><rect x="999.4" y="114.3" width="3.6" height="1.2" fill="#569cd6" opacity="0.45"/><rect x="1003.0" y="114.3" width="0.9" height="1.2" fill="#808080" opacity="0.45"/><rect x="1002.1" y="116.3" width="0.9" height="1.2" fill="#808080" opacity="0.45"/><rect x="1003.0" y="116.3" width="1.8" height="1.2" fill="#569cd6" opacity="0.45"/><rect x="1004.8" y="116.3" width="0.9" height="1.2" fill="#808080" opacity="0.45"/><rect x="1005.7" y="116.3" width="18.9" height="1.2" fill="#d4d4d4" opacity="0.27"/><rect x="1024.6" y="116.3" width="1.8" height="1.2" fill="#808080" opacity="0.45"/><rect x="1026.4" y="116.3" width="1.8" height="1.2" fill="#569cd6" opacity="0.45"/><rect x="1028.2" y="116.3" width="0.9" height="1.2" fill="#808080" opacity="0.45"/><rect x="1002.1" y="118.3" width="0.9" height="1.2" fill="#808080" opacity="0.45"/><rect x="1003.0" y="118.3" width="0.9" height="1.2" fill="#569cd6" opacity="0.45"/><rect x="1003.9" y="118.3" width="0.9" height="1.2" fill="#808080" opacity="0.45"/><rect x="1004.8" y="118.3" width="42.2" height="1.2" fill="#d4d4d4" opacity="0.27"/><rect x="1002.1" y="120.3" width="0.9" height="1.2" fill="#808080" opacity="0.45"/><rect x="1003.0" y="120.3" width="0.9" height="1.2" fill="#569cd6" opacity="0.45"/><rect x="1003.9" y="120.3" width="0.9" height="1.2" fill="#808080" opacity="0.45"/><rect x="1004.8" y="120.3" width="42.2" height="1.2" fill="#d4d4d4" opacity="0.27"/><rect x="1002.1" y="122.3" width="0.9" height="1.2" fill="#808080" opacity="0.45"/><rect x="1003.0" y="122.3" width="0.9" height="1.2" fill="#569cd6" opacity="0.45"/><rect x="1003.9" y="122.3" width="0.9" height="1.2" fill="#808080" opacity="0.45"/><rect x="1004.8" y="122.3" width="42.2" height="1.2" fill="#d4d4d4" opacity="0.27"/><rect x="998.5" y="124.3" width="1.8" height="1.2" fill="#808080" opacity="0.45"/><rect x="1000.3" y="124.3" width="3.6" height="1.2" fill="#569cd6" opacity="0.45"/><rect x="1003.9" y="124.3" width="0.9" height="1.2" fill="#808080" opacity="0.45"/><rect x="998.5" y="128.3" width="1.8" height="1.2" fill="#808080" opacity="0.45"/><rect x="1000.3" y="128.3" width="3.6" height="1.2" fill="#569cd6" opacity="0.45"/><rect x="1003.9" y="128.3" width="0.9" height="1.2" fill="#808080" opacity="0.45"/><rect x="998" y="130.3" width="49" height="1.6" fill="#264f78" opacity="0.8"/></svg>
<div class="abs" style="left:1047px;top:96px;width:1px;height:459px;background:#2d2d2d"></div>
<div class="abs" style="left:1048px;top:288px;width:11px;height:2px;background:#6a6a6a"></div>
<svg style="left:0;top:0" width="1080" height="594" fill="none" stroke="#a29d7a" stroke-width="1.3">
<path d="M529,60 L537,60 L542,65 L542,76 L529,76 Z M537,60 L537,65 L542,65 M529,64 L525.5,64 L525.5,79 L536,79 L536,76"/>
<circle cx="536.5" cy="108.6" r="6.8"/><path d="M531.6,113.5 L525,121"/>
<circle cx="529.6" cy="148" r="2.5"/><circle cx="538.7" cy="152" r="2.5"/><circle cx="529.6" cy="161.6" r="2.5"/><path d="M529.6,150.5 L529.6,159 M538.7,154.5 Q538,159 532,160.5"/>
<path d="M531,197 L531,189 L544,196 L535.5,200.8"/><ellipse cx="529.5" cy="204" rx="3" ry="3.8"/><path d="M529.5,201 L529.5,207.5 M524.5,202.5 L526.5,203 M524.5,206.5 L526.5,205.5 M534.5,202.5 L532.5,203 M534.5,206.5 L532.5,205.5 M527,199.5 L528,200.5 M532,199.5 L531,200.5"/>
<path d="M524.6,236 L532.5,236 L532.5,243.8 L524.6,243.8 Z M524.6,243.8 L524.6,251 L532.5,251 L532.5,243.8 M532.5,243.8 L540.3,243.8 L540.3,251 L532.5,251"/><rect x="536.4" y="232.8" width="7.6" height="7.6" rx="0.8"/>
<path d="M528,278.5 L543,278.5 L540,292 L525,292 Z M531,282 L535,285.5 L530,289 M535,290 L538,290"/>
<circle cx="533.8" cy="328.2" r="9.5"/><path d="M532,322 L532.5,334 M532,322 L537,330"/><circle cx="532" cy="322" r="1.5" fill="#a29d7a"/><circle cx="532.5" cy="334" r="1.5" fill="#a29d7a"/><circle cx="537" cy="330" r="1.5" fill="#a29d7a"/>
<circle cx="528.5" cy="366" r="2.6"/><circle cx="528.5" cy="379" r="2.6"/><circle cx="540" cy="379" r="2.6"/><path d="M528.5,368.6 L528.5,376.4 M540,376.4 L540,370 Q540,366 536,366 L533,366 M535,363.8 L533,366 L535,368.2"/>
<circle cx="534" cy="487.7" r="9.3"/><circle cx="534" cy="484.5" r="3.6"/><path d="M527.5,494.5 Q528.5,489.8 534,489.8 Q539.5,489.8 540.5,494.5"/>
</svg>
<svg style="left:0;top:0" width="1080" height="594"><polygon points="540.65,529.36 542.97,529.66 542.97,532.74 540.65,533.04 540.00,534.60 541.43,536.45 539.25,538.63 537.40,537.20 535.84,537.85 535.54,540.17 532.46,540.17 532.16,537.85 530.60,537.20 528.75,538.63 526.57,536.45 528.00,534.60 527.35,533.04 525.03,532.74 525.03,529.66 527.35,529.36 528.00,527.80 526.57,525.95 528.75,523.77 530.60,525.20 532.16,524.55 532.46,522.23 535.54,522.23 535.84,524.55 537.40,525.20 539.25,523.77 541.43,525.95 540.00,527.80" fill="none" stroke="#a29d7a" stroke-width="1.3" stroke-linejoin="round"/><circle cx="534" cy="531.2" r="2.8" fill="none" stroke="#a29d7a" stroke-width="1.3"/></svg>
<svg style="left:0;top:0" width="1080" height="594"><circle cx="541" cy="75" r="6.5" fill="#007acc"/><circle cx="540.5" cy="162" r="6.8" fill="#007acc"/></svg>
<div class="abs" style="left:534.5px;top:69px;width:13px;text-align:center;font-size:8.5px;line-height:12px;font-weight:bold;color:#fff">1</div>
<div class="abs" style="left:533px;top:156px;width:15px;text-align:center;font-size:8px;line-height:12px;font-weight:bold;color:#fff;letter-spacing:-0.5px">14</div>
<svg style="left:0;top:0" width="1080" height="594" fill="none" stroke="#fff" stroke-width="1.1">
<circle cx="529.5" cy="559" r="1.4"/><circle cx="529.5" cy="569" r="1.4"/><circle cx="535.5" cy="561" r="1.4"/><path d="M529.5,560.4 L529.5,567.6 M535.5,562.4 Q535.5,566 530.5,567.8"/>
<path d="M590.2,563.2 A4.3,4.3 0 0 1 598.2,562 M598.4,564.6 A4.3,4.3 0 0 1 590.4,566"/>
<circle cx="645.6" cy="563.9" r="4.7"/><path d="M643.4,561.7 L647.8,566.1 M647.8,561.7 L643.4,566.1"/>
<path d="M668.1,559.6 L672.8,567.8 L663.4,567.8 Z M668.1,562.3 L668.1,565 M668.1,566 L668.1,566.8"/>
<circle cx="1014.4" cy="563.8" r="2"/><path d="M1011,569.3 Q1011.5,566.3 1014.4,566.3 Q1017.3,566.3 1017.8,569.3 M1013.5,560.5 L1013.5,559 L1021,559 L1021,563.8 L1018.5,563.8 L1017,565.3"/>
<path d="M1037,567.6 L1045,567.6 M1037.8,567.6 L1037.8,563.5 Q1037.8,559.6 1041,559.6 Q1042,559.6 1042.6,560 M1044.2,563 L1044.2,567.6 M1040,569.2 L1042,569.2"/>
</svg>
<svg style="left:0;top:0" width="1080" height="594"><circle cx="1043.9" cy="560.9" r="2.1" fill="#fff"/><path d="M588.2,562.2 L592.4,562.2 L590.2,565 Z M600.4,565.6 L596.2,565.6 L598.4,562.8 Z" fill="#fff"/></svg>
<div class="abs nw" style="left:541.5px;top:558px;font-size:10px;line-height:13px;color:#fff"><span class="r" style="width:34.45px">master*</span></div>
<div class="abs nw" style="left:603.0px;top:558px;font-size:10px;line-height:13px;color:#fff"><span class="r" style="width:23.91px">3↓ 0↑</span></div>
<div class="abs nw" style="left:654.0px;top:558px;font-size:10px;line-height:13px;color:#fff"><span class="r" style="width:5.56px">0</span></div>
<div class="abs nw" style="left:677.0px;top:558px;font-size:10px;line-height:13px;color:#fff"><span class="r" style="width:5.56px">0</span></div>
<div class="abs nw" style="left:729.5px;top:558px;font-size:10px;line-height:13px;color:#fff"><span class="cj" style="width:10.80px;font-size:11.00px;letter-spacing:-0.20px">行</span><span class="r" style="width:13.91px"> 18</span><span class="cj" style="width:21.60px;font-size:11.00px;letter-spacing:-0.20px">，列</span><span class="r" style="width:8.34px"> 1</span></div>
<div class="abs nw" style="left:794.5px;top:558px;font-size:10px;line-height:13px;color:#fff"><span class="cj" style="width:21.60px;font-size:11.00px;letter-spacing:-0.20px">空格</span><span class="r" style="width:11.12px">: 4</span></div>
<div class="abs nw" style="left:838.5px;top:558px;font-size:10px;line-height:13px;color:#fff"><span class="r" style="width:28.34px">UTF-8</span></div>
<div class="abs nw" style="left:878.0px;top:558px;font-size:10px;line-height:13px;color:#fff;letter-spacing:-0.7px">CRLF</div>
<div class="abs nw" style="left:914.0px;top:558px;font-size:10px;line-height:13px;color:#fff"><span class="r" style="width:18.91px">html</span></div>
<div class="abs nw" style="left:947.5px;top:558px;font-size:10px;line-height:13px;color:#fff"><span class="r" style="width:46.14px">kite: ready</span></div>
<svg style="left:0;top:0" width="1080" height="594">
<path d="M851,525 C842.5,525 836,530.5 836,537.5 C836,541.5 838.2,545 841.5,547.3 L840.5,552.5 L846,549.5 C847.5,550 849.2,550.2 851,550.2 C859.5,550.2 866,544.5 866,537.5 C866,530.5 859.5,525 851,525 Z" fill="#e3e3e3" stroke="#1e1e1e" stroke-width="0.8"/>
<circle cx="845.5" cy="534.8" r="1.4" fill="#1e1e1e"/><circle cx="856.5" cy="534.8" r="1.4" fill="#1e1e1e"/>
<path d="M865,537.5 C857.5,537.5 852,542.5 852,548.5 C852,554.5 857.5,559.5 865,559.5 C866.5,559.5 868,559.3 869.3,558.8 L874.5,562 L873.5,557 C876.5,555 878,552 878,548.5 C878,542.5 872.5,537.5 865,537.5 Z" fill="#e6e6e6" fill-opacity="0.9" stroke="#1e1e1e" stroke-width="1.2"/>
<circle cx="860.5" cy="545.5" r="1.3" fill="#1e1e1e"/><circle cx="869.5" cy="545.5" r="1.3" fill="#1e1e1e"/>
</svg>
<div class="abs nw" style="left:884px;top:529.5px;font-size:26px;line-height:30px;color:#fff"><span class="cj" style="width:158.40px;font-size:26.00px;letter-spacing:0.40px">奔波儿灞取经</span></div>
</body></html>
